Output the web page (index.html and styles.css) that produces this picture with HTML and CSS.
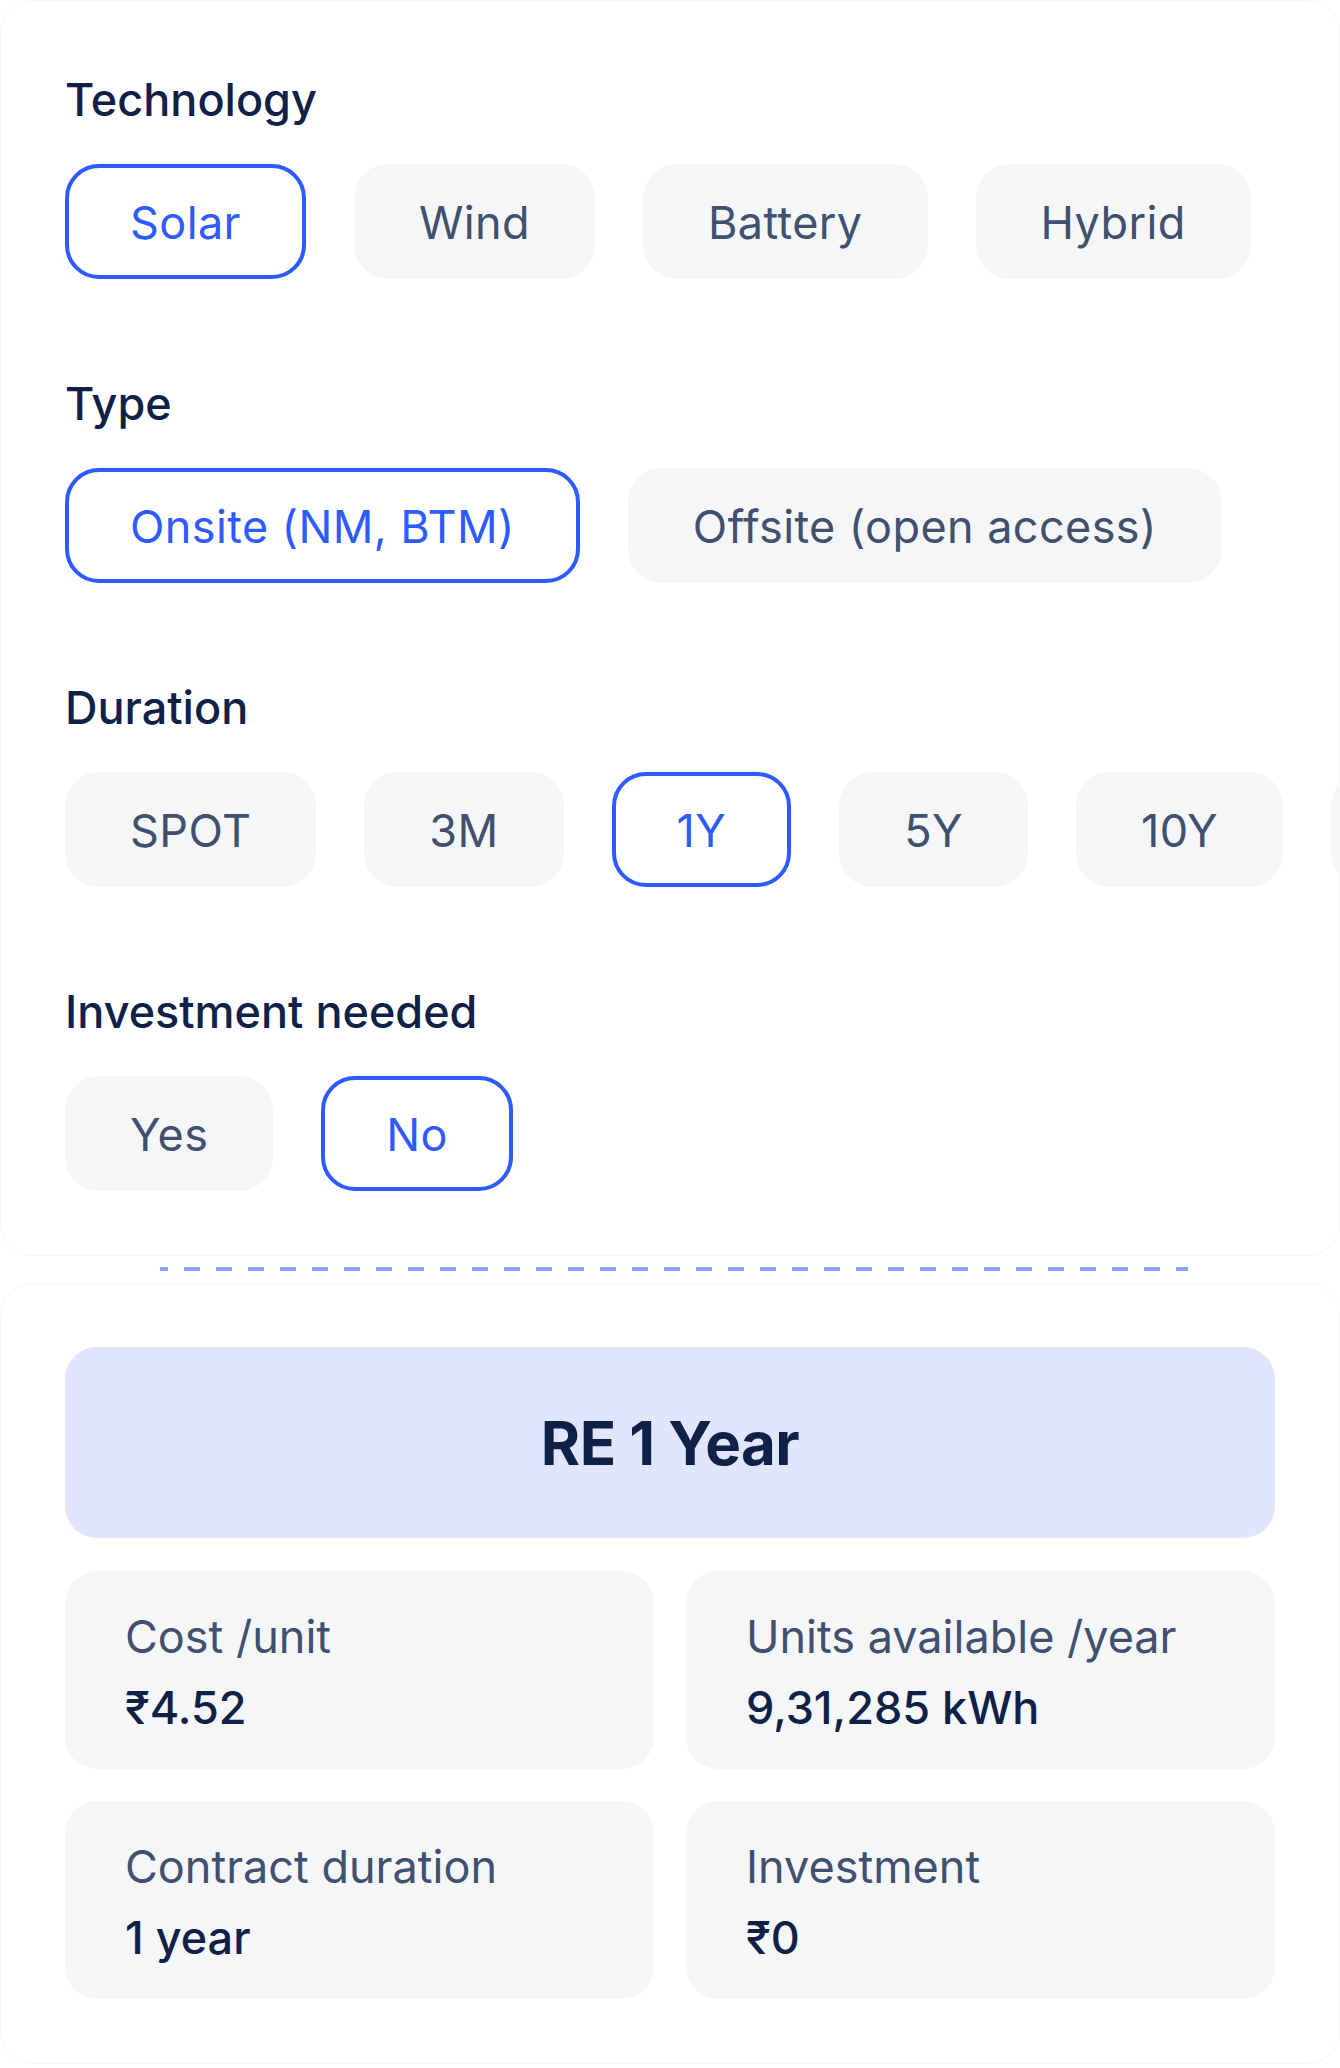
FILE: index.html
```html
<!DOCTYPE html>
<html lang="en">
<head>
    <meta charset="UTF-8">
    <meta name="viewport" content="width=device-width, initial-scale=1.0">
    <title>RE Plan</title>
    <link rel="stylesheet" href="styles.css">
</head>
<body>
    <div class="sheet filters">
        <div class="group">
            <h3 class="group-title">Technology</h3>
            <div class="options">
                <button class="option active">Solar</button>
                <button class="option">Wind</button>
                <button class="option">Battery</button>
                <button class="option">Hybrid</button>
            </div>
        </div>

        <div class="group">
            <h3 class="group-title">Type</h3>
            <div class="options">
                <button class="option active">Onsite (NM, BTM)</button>
                <button class="option">Offsite (open access)</button>
            </div>
        </div>

        <div class="group">
            <h3 class="group-title">Duration</h3>
            <div class="options">
                <button class="option">SPOT</button>
                <button class="option">3M</button>
                <button class="option active">1Y</button>
                <button class="option">5Y</button>
                <button class="option">10Y</button>
                <button class="option">15Y</button>
            </div>
        </div>

        <div class="group">
            <h3 class="group-title">Investment needed</h3>
            <div class="options">
                <button class="option">Yes</button>
                <button class="option active">No</button>
            </div>
        </div>
    </div>

    <div class="divider"></div>

    <div class="sheet summary">
        <div class="plan-title">RE 1 Year</div>
        <div class="stats">
            <div class="stat">
                <p class="stat-label">Cost /unit</p>
                <p class="stat-value">₹4.52</p>
            </div>
            <div class="stat">
                <p class="stat-label">Units available /year</p>
                <p class="stat-value">9,31,285 kWh</p>
            </div>
            <div class="stat">
                <p class="stat-label">Contract duration</p>
                <p class="stat-value">1 year</p>
            </div>
            <div class="stat">
                <p class="stat-label">Investment</p>
                <p class="stat-value">₹0</p>
            </div>
        </div>
    </div>
</body>
</html>
```

FILE: styles.css
```css
html, body {
    margin: 0;
    padding: 0;
    overflow: hidden;
}

body {
    font-family: Inter, "Noto Sans", sans-serif;
    background-color: #fff;
    color: #0f2147;
}

.sheet {
    background-color: #fff;
    border: 1px solid #f6f7f8;
    border-radius: 32px;
    overflow: hidden;
}

.filters {
    padding: 67px 64px 64px;
}

.group {
    margin-bottom: 93px;
}

.group:last-child {
    margin-bottom: 0;
}

.group-title {
    margin: 0 0 33px;
    font-size: 45px;
    line-height: 63px;
    font-weight: 500;
    color: #0f2147;
}

.options {
    display: flex;
    gap: 48px;
}

.option {
    flex: none;
    font-family: inherit;
    font-size: 45px;
    line-height: 63px;
    font-weight: 400;
    letter-spacing: 0.4px;
    color: #41506e;
    background-color: #f4f6f8;
    border: 4px solid transparent;
    border-radius: 34px;
    padding: 23px 61px 21px;
    cursor: pointer;
}

.option.active {
    background-color: #fff;
    border-color: #2d5bff;
    color: #2d5bff;
}

.divider {
    width: 1028px;
    height: 4px;
    margin: 11px 0 12px 160px;
    background: repeating-linear-gradient(90deg, #89a3fb 0 16px, transparent 16px 32px);
    background-position: -8px 0;
}

.summary {
    padding: 63px 64px 64px;
}

.plan-title {
    background-color: #e1e6fe;
    border-radius: 32px;
    height: 191px;
    display: flex;
    align-items: center;
    justify-content: center;
    font-size: 60px;
    font-weight: 700;
    letter-spacing: -0.5px;
    color: #0f2147;
    margin-bottom: 33px;
}

.stats {
    display: grid;
    grid-template-columns: 1fr 1fr;
    gap: 32px;
}

.stat {
    background-color: #f4f6f8;
    border-radius: 32px;
    padding: 34px 60px 30px;
}

.stat p {
    margin: 0;
    font-size: 45px;
    line-height: 63px;
}

.stat-label {
    color: #41506e;
    font-weight: 400;
    margin-bottom: 8px !important;
}

.stat-value {
    color: #0f2147;
    font-weight: 500;
}
```
